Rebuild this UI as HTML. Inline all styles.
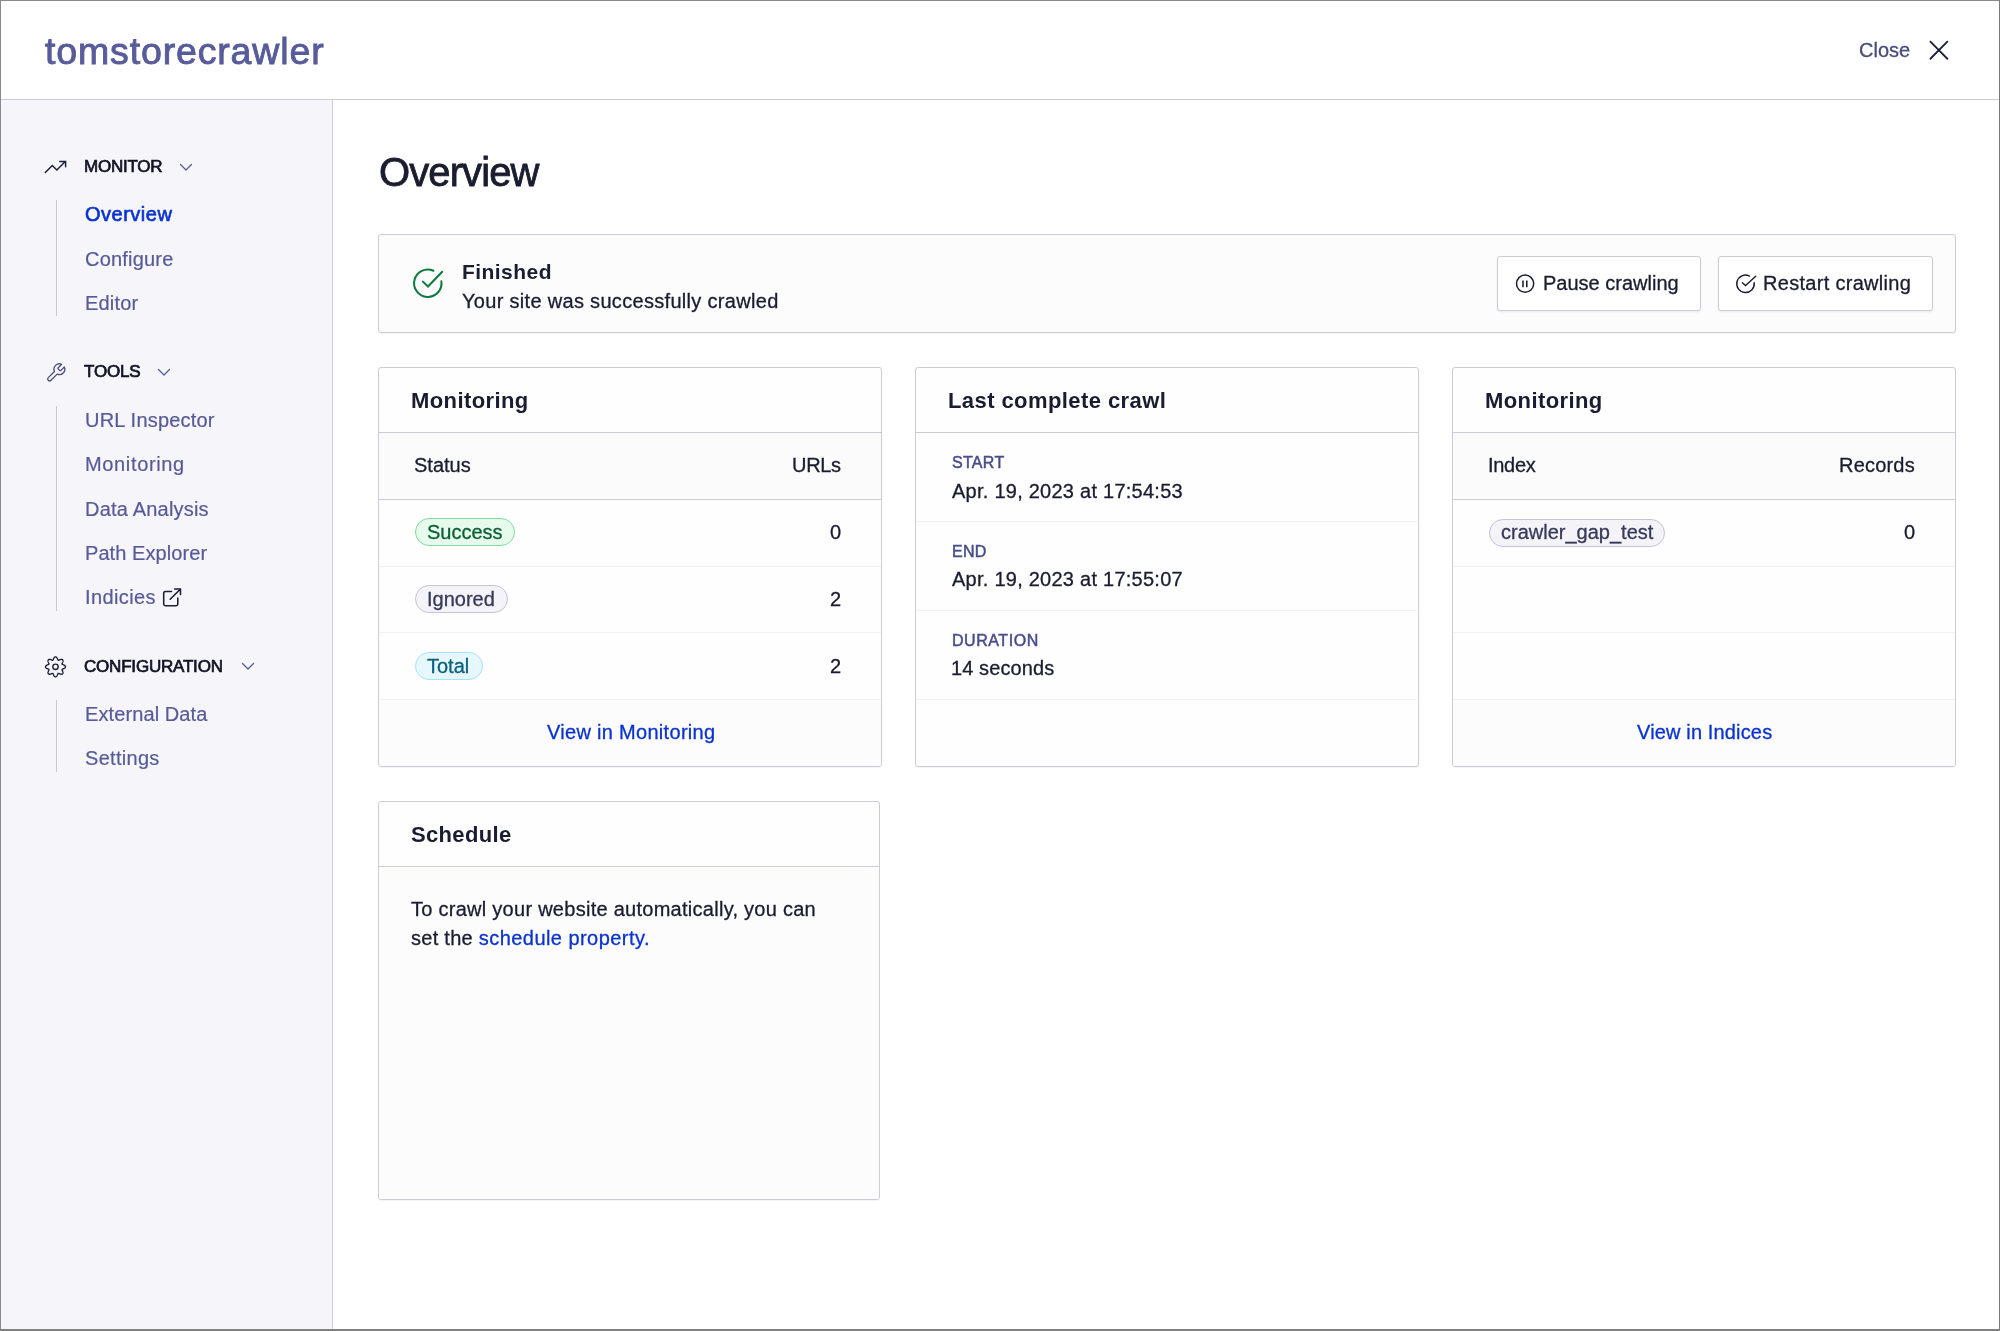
<!DOCTYPE html>
<html><head><meta charset="utf-8"><title>tomstorecrawler</title>
<style>
html,body{margin:0;padding:0;}
body{width:2000px;height:1331px;position:relative;overflow:hidden;background:#fff;font-family:"Liberation Sans", sans-serif;}
.t{position:absolute;white-space:nowrap;font-family:"Liberation Sans", sans-serif;will-change:transform;}
svg{overflow:visible;}
</style></head><body>
<div style="position:absolute;left:0px;top:0px;width:2000px;height:99px;background:#fff;"></div>
<div style="position:absolute;left:0px;top:99px;width:2000px;height:1px;background:#cccbda;"></div>
<div style="position:absolute;left:0px;top:100px;width:332px;height:1231px;background:#f5f5fa;"></div>
<div style="position:absolute;left:332px;top:100px;width:1px;height:1231px;background:#cccbda;"></div>
<div class="t" style="left:44.5px;top:33.12px;font-size:37.5px;line-height:37.5px;color:#585b9a;font-weight:400;letter-spacing:0.85px;-webkit-text-stroke:0.9px #585b9a;">tomstorecrawler</div>
<div class="t" style="left:1859px;top:40.00px;font-size:20px;line-height:20px;color:#484c7a;font-weight:400;-webkit-text-stroke:0.3px #484c7a;">Close</div>
<svg style="position:absolute;left:1927px;top:39px" width="24" height="24" viewBox="0 0 24 24"><path d="M3.4 2.7L20.35 19.75M20.35 2.7L3.4 19.75" stroke="#1c1d36" stroke-width="1.8" fill="none" stroke-linecap="round"/></svg>
<svg style="position:absolute;left:43px;top:159px" width="26" height="18" viewBox="0 0 26 18"><path d="M2.3 13.5L9.3 6.5L13.85 10.9L22.3 2.6M16.8 2.5H22.6V7.7" stroke="#1c1d36" stroke-width="1.45" fill="none" stroke-linecap="round" stroke-linejoin="miter"/></svg>
<div class="t" style="left:84px;top:157.75px;font-size:17px;line-height:17px;color:#121425;font-weight:400;letter-spacing:-0.25px;-webkit-text-stroke:0.7px #121425;">MONITOR</div>
<svg style="position:absolute;left:178px;top:161.5px" width="16" height="10" viewBox="0 0 16 10"><path d="M2.5 2.5L8 8L13.5 2.5" stroke="#575a96" stroke-width="1.3" fill="none" stroke-linecap="round" stroke-linejoin="round"/></svg>
<div style="position:absolute;left:56px;top:200px;width:1px;height:116px;background:#c8c8d6;"></div>
<div class="t" style="left:85.3px;top:203.80px;font-size:20px;line-height:20px;color:#0a33cf;font-weight:400;letter-spacing:0.5px;-webkit-text-stroke:0.65px #0a33cf;">Overview</div>
<div class="t" style="left:85.0px;top:248.50px;font-size:20px;line-height:20px;color:#575a96;font-weight:400;letter-spacing:0.2px;-webkit-text-stroke:0.2px #575a96;">Configure</div>
<div class="t" style="left:84.5px;top:292.50px;font-size:20px;line-height:20px;color:#575a96;font-weight:400;letter-spacing:0.2px;-webkit-text-stroke:0.2px #575a96;">Editor</div>
<svg style="position:absolute;left:44.5px;top:361.5px" width="21.6" height="21.6" viewBox="0 0 24 24"><path d="M14.7 6.3a1 1 0 0 0 0 1.4l1.6 1.6a1 1 0 0 0 1.4 0l3.77-3.77a6 6 0 0 1-7.94 7.94l-6.91 6.91a2.12 2.12 0 0 1-3-3l6.91-6.91a6 6 0 0 1 7.940-7.94l-3.76 3.76z" stroke="#4f5080" stroke-width="1.5" fill="none" stroke-linecap="round" stroke-linejoin="round"/></svg>
<div class="t" style="left:84px;top:363.15px;font-size:17px;line-height:17px;color:#121425;font-weight:400;letter-spacing:-0.2px;-webkit-text-stroke:0.7px #121425;">TOOLS</div>
<svg style="position:absolute;left:156px;top:367px" width="16" height="10" viewBox="0 0 16 10"><path d="M2.5 2.5L8 8L13.5 2.5" stroke="#575a96" stroke-width="1.3" fill="none" stroke-linecap="round" stroke-linejoin="round"/></svg>
<div style="position:absolute;left:56px;top:406px;width:1px;height:205px;background:#c8c8d6;"></div>
<div class="t" style="left:84.5px;top:409.50px;font-size:20px;line-height:20px;color:#575a96;font-weight:400;letter-spacing:0.2px;-webkit-text-stroke:0.2px #575a96;">URL Inspector</div>
<div class="t" style="left:84.5px;top:454.00px;font-size:20px;line-height:20px;color:#575a96;font-weight:400;letter-spacing:0.65px;-webkit-text-stroke:0.2px #575a96;">Monitoring</div>
<div class="t" style="left:84.5px;top:498.50px;font-size:20px;line-height:20px;color:#575a96;font-weight:400;letter-spacing:0.2px;-webkit-text-stroke:0.2px #575a96;">Data Analysis</div>
<div class="t" style="left:84.5px;top:543.00px;font-size:20px;line-height:20px;color:#575a96;font-weight:400;letter-spacing:0.08px;-webkit-text-stroke:0.2px #575a96;">Path Explorer</div>
<div class="t" style="left:84.5px;top:587.30px;font-size:20px;line-height:20px;color:#575a96;font-weight:400;letter-spacing:0.4px;-webkit-text-stroke:0.2px #575a96;">Indicies</div>
<svg style="position:absolute;left:161px;top:586px" width="22" height="22" viewBox="0 0 22 22"><path d="M10.5 5.5H4.5a1.8 1.8 0 0 0-1.8 1.8v10.7a1.8 1.8 0 0 0 1.8 1.8h10.5a1.8 1.8 0 0 0 1.8-1.8V12M13.6 3H19.5V8.6M19.5 3L9.2 13.3" stroke="#1c1d36" stroke-width="1.55" fill="none" stroke-linecap="round" stroke-linejoin="round"/></svg>
<svg style="position:absolute;left:43px;top:654px" width="25" height="25" viewBox="0 0 25 25"><circle cx="12.50" cy="12.80" r="2.7" stroke="#1c1d36" stroke-width="1.4" fill="none"/><path d="M22.50 12.80 L22.48 13.00 L22.43 13.19 L22.35 13.38 L22.23 13.57 L22.09 13.74 L21.92 13.91 L21.72 14.08 L21.51 14.23 L21.28 14.37 L21.04 14.50 L20.79 14.62 L20.55 14.73 L20.30 14.84 L20.06 14.93 L19.84 15.03 L19.63 15.12 L19.44 15.21 L19.28 15.30 L19.15 15.40 L19.06 15.52 L19.04 15.66 L19.06 15.82 L19.11 16.01 L19.18 16.20 L19.26 16.41 L19.36 16.64 L19.46 16.88 L19.56 17.12 L19.65 17.38 L19.74 17.64 L19.82 17.90 L19.88 18.16 L19.92 18.42 L19.95 18.67 L19.95 18.91 L19.92 19.14 L19.87 19.35 L19.80 19.55 L19.70 19.72 L19.57 19.87 L19.42 20.00 L19.25 20.10 L19.05 20.17 L18.84 20.22 L18.61 20.25 L18.37 20.25 L18.12 20.22 L17.86 20.18 L17.60 20.12 L17.34 20.04 L17.08 19.95 L16.82 19.86 L16.58 19.76 L16.34 19.66 L16.11 19.56 L15.90 19.48 L15.71 19.41 L15.52 19.36 L15.36 19.34 L15.22 19.36 L15.10 19.45 L15.00 19.58 L14.91 19.74 L14.82 19.93 L14.73 20.14 L14.63 20.36 L14.54 20.60 L14.43 20.85 L14.32 21.09 L14.20 21.34 L14.07 21.58 L13.93 21.81 L13.78 22.02 L13.61 22.22 L13.44 22.39 L13.27 22.53 L13.08 22.65 L12.89 22.73 L12.70 22.78 L12.50 22.80 L12.30 22.78 L12.11 22.73 L11.92 22.65 L11.73 22.53 L11.56 22.39 L11.39 22.22 L11.22 22.02 L11.07 21.81 L10.93 21.58 L10.80 21.34 L10.68 21.09 L10.57 20.85 L10.46 20.60 L10.37 20.36 L10.27 20.14 L10.18 19.93 L10.09 19.74 L10.00 19.58 L9.90 19.45 L9.78 19.36 L9.64 19.34 L9.48 19.36 L9.29 19.41 L9.10 19.48 L8.89 19.56 L8.66 19.66 L8.42 19.76 L8.18 19.86 L7.92 19.95 L7.66 20.04 L7.40 20.12 L7.14 20.18 L6.88 20.22 L6.63 20.25 L6.39 20.25 L6.16 20.22 L5.95 20.17 L5.75 20.10 L5.58 20.00 L5.43 19.87 L5.30 19.72 L5.20 19.55 L5.13 19.35 L5.08 19.14 L5.05 18.91 L5.05 18.67 L5.08 18.42 L5.12 18.16 L5.18 17.90 L5.26 17.64 L5.35 17.38 L5.44 17.12 L5.54 16.88 L5.64 16.64 L5.74 16.41 L5.82 16.20 L5.89 16.01 L5.94 15.82 L5.96 15.66 L5.94 15.52 L5.85 15.40 L5.72 15.30 L5.56 15.21 L5.37 15.12 L5.16 15.03 L4.94 14.93 L4.70 14.84 L4.45 14.73 L4.21 14.62 L3.96 14.50 L3.72 14.37 L3.49 14.23 L3.28 14.08 L3.08 13.91 L2.91 13.74 L2.77 13.57 L2.65 13.38 L2.57 13.19 L2.52 13.00 L2.50 12.80 L2.52 12.60 L2.57 12.41 L2.65 12.22 L2.77 12.03 L2.91 11.86 L3.08 11.69 L3.28 11.52 L3.49 11.37 L3.72 11.23 L3.96 11.10 L4.21 10.98 L4.45 10.87 L4.70 10.76 L4.94 10.67 L5.16 10.57 L5.37 10.48 L5.56 10.39 L5.72 10.30 L5.85 10.20 L5.94 10.08 L5.96 9.94 L5.94 9.78 L5.89 9.59 L5.82 9.40 L5.74 9.19 L5.64 8.96 L5.54 8.72 L5.44 8.48 L5.35 8.22 L5.26 7.96 L5.18 7.70 L5.12 7.44 L5.08 7.18 L5.05 6.93 L5.05 6.69 L5.08 6.46 L5.13 6.25 L5.20 6.05 L5.30 5.88 L5.43 5.73 L5.58 5.60 L5.75 5.50 L5.95 5.43 L6.16 5.38 L6.39 5.35 L6.63 5.35 L6.88 5.38 L7.14 5.42 L7.40 5.48 L7.66 5.56 L7.92 5.65 L8.18 5.74 L8.42 5.84 L8.66 5.94 L8.89 6.04 L9.10 6.12 L9.29 6.19 L9.48 6.24 L9.64 6.26 L9.78 6.24 L9.90 6.15 L10.00 6.02 L10.09 5.86 L10.18 5.67 L10.27 5.46 L10.37 5.24 L10.46 5.00 L10.57 4.75 L10.68 4.51 L10.80 4.26 L10.93 4.02 L11.07 3.79 L11.22 3.58 L11.39 3.38 L11.56 3.21 L11.73 3.07 L11.92 2.95 L12.11 2.87 L12.30 2.82 L12.50 2.80 L12.70 2.82 L12.89 2.87 L13.08 2.95 L13.27 3.07 L13.44 3.21 L13.61 3.38 L13.78 3.58 L13.93 3.79 L14.07 4.02 L14.20 4.26 L14.32 4.51 L14.43 4.75 L14.54 5.00 L14.63 5.24 L14.73 5.46 L14.82 5.67 L14.91 5.86 L15.00 6.02 L15.10 6.15 L15.22 6.24 L15.36 6.26 L15.52 6.24 L15.71 6.19 L15.90 6.12 L16.11 6.04 L16.34 5.94 L16.58 5.84 L16.82 5.74 L17.08 5.65 L17.34 5.56 L17.60 5.48 L17.86 5.42 L18.12 5.38 L18.37 5.35 L18.61 5.35 L18.84 5.38 L19.05 5.43 L19.25 5.50 L19.42 5.60 L19.57 5.73 L19.70 5.88 L19.80 6.05 L19.87 6.25 L19.92 6.46 L19.95 6.69 L19.95 6.93 L19.92 7.18 L19.88 7.44 L19.82 7.70 L19.74 7.96 L19.65 8.22 L19.56 8.48 L19.46 8.72 L19.36 8.96 L19.26 9.19 L19.18 9.40 L19.11 9.59 L19.06 9.78 L19.04 9.94 L19.06 10.08 L19.15 10.20 L19.28 10.30 L19.44 10.39 L19.63 10.48 L19.84 10.57 L20.06 10.67 L20.30 10.76 L20.55 10.87 L20.79 10.98 L21.04 11.10 L21.28 11.23 L21.51 11.37 L21.72 11.52 L21.92 11.69 L22.09 11.86 L22.23 12.03 L22.35 12.22 L22.43 12.41 L22.48 12.60Z" stroke="#1c1d36" stroke-width="1.35" fill="none" stroke-linejoin="round"/></svg>
<div class="t" style="left:84px;top:657.55px;font-size:17px;line-height:17px;color:#121425;font-weight:400;letter-spacing:-0.2px;-webkit-text-stroke:0.7px #121425;">CONFIGURATION</div>
<svg style="position:absolute;left:239.5px;top:661px" width="16" height="10" viewBox="0 0 16 10"><path d="M2.5 2.5L8 8L13.5 2.5" stroke="#575a96" stroke-width="1.3" fill="none" stroke-linecap="round" stroke-linejoin="round"/></svg>
<div style="position:absolute;left:56px;top:700px;width:1px;height:72px;background:#c8c8d6;"></div>
<div class="t" style="left:84.5px;top:703.80px;font-size:20px;line-height:20px;color:#575a96;font-weight:400;letter-spacing:0.1px;-webkit-text-stroke:0.2px #575a96;">External Data</div>
<div class="t" style="left:85.0px;top:748.00px;font-size:20px;line-height:20px;color:#575a96;font-weight:400;letter-spacing:0.3px;-webkit-text-stroke:0.2px #575a96;">Settings</div>
<div class="t" style="left:379px;top:152.00px;font-size:40px;line-height:40px;color:#1a1c2f;font-weight:400;letter-spacing:-0.9px;-webkit-text-stroke:0.8px #1a1c2f;">Overview</div>
<div style="position:absolute;left:378px;top:234px;width:1578px;height:99px;box-sizing:border-box;border:1px solid #cccbda;border-radius:3px;background:#fcfcfd;box-shadow:0 1px 1px rgba(35,38,59,0.05);"></div>
<svg style="position:absolute;left:410px;top:265.5px" width="36" height="36" viewBox="0 0 36 36"><path d="M31.37 15.34A13.7 13.7 0 1 1 23.44 4.72" stroke="#0b7a3e" stroke-width="2.0" fill="none" stroke-linecap="round"/><path d="M12.9 15.6L18 20.5L32.2 5.8" stroke="#0b7a3e" stroke-width="2.0" fill="none" stroke-linecap="round" stroke-linejoin="miter"/></svg>
<div class="t" style="left:462px;top:261.15px;font-size:21px;line-height:21px;color:#1a1c2f;font-weight:700;letter-spacing:0.45px;">Finished</div>
<div class="t" style="left:462px;top:291.40px;font-size:20px;line-height:20px;color:#1a1c2f;font-weight:400;letter-spacing:0.31px;-webkit-text-stroke:0.3px #1a1c2f;">Your site was successfully crawled</div>
<div style="position:absolute;left:1497px;top:256px;width:204px;height:55px;box-sizing:border-box;border:1px solid #cccbda;border-radius:3px;background:#fff;box-shadow:0 1px 2px rgba(35,38,59,0.08);"></div>
<svg style="position:absolute;left:1513px;top:271.5px" width="24" height="24" viewBox="0 0 24 24"><circle cx="12.1" cy="11.7" r="8.6" stroke="#1c1d36" stroke-width="1.5" fill="none"/><path d="M10.0 8.5v6.7M13.8 8.5v6.7" stroke="#1c1d36" stroke-width="1.55" fill="none"/></svg>
<div class="t" style="left:1543px;top:273.20px;font-size:20px;line-height:20px;color:#1a1c2f;font-weight:400;-webkit-text-stroke:0.3px #1a1c2f;">Pause crawling</div>
<div style="position:absolute;left:1718px;top:256px;width:215px;height:55px;box-sizing:border-box;border:1px solid #cccbda;border-radius:3px;background:#fff;box-shadow:0 1px 2px rgba(35,38,59,0.08);"></div>
<svg style="position:absolute;left:1734px;top:271.5px" width="24" height="24" viewBox="0 0 24 24"><path d="M20.16 10.63A8.75 8.75 0 1 1 15.47 4.05" stroke="#1c1d36" stroke-width="1.45" fill="none" stroke-linecap="round"/><path d="M8.4 10.8L11.55 13.6L21.7 4.2" stroke="#1c1d36" stroke-width="1.45" fill="none" stroke-linecap="round" stroke-linejoin="miter"/></svg>
<div class="t" style="left:1763px;top:273.20px;font-size:20px;line-height:20px;color:#1a1c2f;font-weight:400;letter-spacing:0.3px;-webkit-text-stroke:0.3px #1a1c2f;">Restart crawling</div>
<div style="position:absolute;left:378px;top:367px;width:504px;height:400px;box-sizing:border-box;border:1px solid #cccbda;border-radius:3px;background:#fefefe;overflow:hidden;box-shadow:0 1px 1px rgba(35,38,59,0.05);"></div>
<div style="position:absolute;left:379px;top:432px;width:502px;height:1px;background:#cccbda;"></div>
<div style="position:absolute;left:915px;top:367px;width:504px;height:400px;box-sizing:border-box;border:1px solid #cccbda;border-radius:3px;background:#fefefe;overflow:hidden;box-shadow:0 1px 1px rgba(35,38,59,0.05);"></div>
<div style="position:absolute;left:916px;top:432px;width:502px;height:1px;background:#cccbda;"></div>
<div style="position:absolute;left:1452px;top:367px;width:504px;height:400px;box-sizing:border-box;border:1px solid #cccbda;border-radius:3px;background:#fefefe;overflow:hidden;box-shadow:0 1px 1px rgba(35,38,59,0.05);"></div>
<div style="position:absolute;left:1453px;top:432px;width:502px;height:1px;background:#cccbda;"></div>
<div class="t" style="left:411px;top:389.80px;font-size:22px;line-height:22px;color:#1a1c2f;font-weight:700;letter-spacing:0.4px;">Monitoring</div>
<div style="position:absolute;left:379px;top:433px;width:502px;height:66px;background:#fbfbfc;"></div>
<div style="position:absolute;left:379px;top:499px;width:502px;height:1px;background:#cccbda;"></div>
<div class="t" style="left:413.8px;top:455.30px;font-size:20px;line-height:20px;color:#1a1c2f;font-weight:400;-webkit-text-stroke:0.3px #1a1c2f;">Status</div>
<div class="t" style="right:1159px;top:455.30px;font-size:20px;line-height:20px;color:#1a1c2f;font-weight:400;letter-spacing:-0.3px;-webkit-text-stroke:0.3px #1a1c2f;">URLs</div>
<div style="position:absolute;left:379px;top:566px;width:502px;height:1px;background:#f0f0f5;"></div>
<div style="position:absolute;left:379px;top:632px;width:502px;height:1px;background:#f0f0f5;"></div>
<div style="position:absolute;left:379px;top:699px;width:502px;height:1px;background:#f0f0f5;"></div>
<div style="position:absolute;left:379px;top:700px;width:502px;height:66px;background:#fcfcfc;border-radius:0 0 2px 2px;"></div>
<div style="position:absolute;left:415px;top:518px;width:100px;height:28px;box-sizing:border-box;border:1px solid #7fe0a0;border-radius:14px;background:#e6fbec;"></div>
<div class="t" style="left:427px;top:521.80px;font-size:20px;line-height:20px;color:#0b5f33;font-weight:400;-webkit-text-stroke:0.3px #0b5f33;">Success</div>
<div style="position:absolute;left:415px;top:585px;width:93px;height:28px;box-sizing:border-box;border:1px solid #c4c4d4;border-radius:14px;background:#f3f3f8;"></div>
<div class="t" style="left:427px;top:588.80px;font-size:20px;line-height:20px;color:#36395a;font-weight:400;-webkit-text-stroke:0.3px #36395a;">Ignored</div>
<div style="position:absolute;left:415px;top:652px;width:68px;height:28px;box-sizing:border-box;border:1px solid #a8e2f5;border-radius:14px;background:#e6f8fd;"></div>
<div class="t" style="left:427px;top:655.50px;font-size:20px;line-height:20px;color:#08607f;font-weight:400;-webkit-text-stroke:0.3px #08607f;">Total</div>
<div class="t" style="right:1159px;top:522.20px;font-size:20px;line-height:20px;color:#1a1c2f;font-weight:400;-webkit-text-stroke:0.3px #1a1c2f;">0</div>
<div class="t" style="right:1159px;top:589.00px;font-size:20px;line-height:20px;color:#1a1c2f;font-weight:400;-webkit-text-stroke:0.3px #1a1c2f;">2</div>
<div class="t" style="right:1159px;top:655.50px;font-size:20px;line-height:20px;color:#1a1c2f;font-weight:400;-webkit-text-stroke:0.3px #1a1c2f;">2</div>
<div class="t" style="left:546.5px;top:722.00px;font-size:20px;line-height:20px;color:#0a33cf;font-weight:400;letter-spacing:0.3px;-webkit-text-stroke:0.3px #0a33cf;">View in Monitoring</div>
<div class="t" style="left:948px;top:389.70px;font-size:22px;line-height:22px;color:#1a1c2f;font-weight:700;letter-spacing:0.42px;">Last complete crawl</div>
<div class="t" style="left:951.5px;top:455.40px;font-size:16px;line-height:16px;color:#484c88;font-weight:400;letter-spacing:0.3px;-webkit-text-stroke:0.5px #484c88;">START</div>
<div class="t" style="left:951.5px;top:480.50px;font-size:20px;line-height:20px;color:#1a1c2f;font-weight:400;letter-spacing:0.25px;-webkit-text-stroke:0.3px #1a1c2f;">Apr. 19, 2023 at 17:54:53</div>
<div style="position:absolute;left:916px;top:521px;width:501px;height:1px;background:#f0f0f5;"></div>
<div class="t" style="left:951.5px;top:544.40px;font-size:16px;line-height:16px;color:#484c88;font-weight:400;letter-spacing:0.3px;-webkit-text-stroke:0.5px #484c88;">END</div>
<div class="t" style="left:951.5px;top:569.00px;font-size:20px;line-height:20px;color:#1a1c2f;font-weight:400;letter-spacing:0.25px;-webkit-text-stroke:0.3px #1a1c2f;">Apr. 19, 2023 at 17:55:07</div>
<div style="position:absolute;left:916px;top:610px;width:501px;height:1px;background:#f0f0f5;"></div>
<div class="t" style="left:951.5px;top:633.40px;font-size:16px;line-height:16px;color:#484c88;font-weight:400;letter-spacing:0.55px;-webkit-text-stroke:0.5px #484c88;">DURATION</div>
<div class="t" style="left:950.5px;top:658.00px;font-size:20px;line-height:20px;color:#1a1c2f;font-weight:400;letter-spacing:0.1px;-webkit-text-stroke:0.3px #1a1c2f;">14 seconds</div>
<div style="position:absolute;left:916px;top:699px;width:501px;height:1px;background:#f0f0f5;"></div>
<div class="t" style="left:1484.5px;top:389.80px;font-size:22px;line-height:22px;color:#1a1c2f;font-weight:700;letter-spacing:0.4px;">Monitoring</div>
<div style="position:absolute;left:1453px;top:433px;width:502px;height:66px;background:#fbfbfc;"></div>
<div style="position:absolute;left:1453px;top:499px;width:502px;height:1px;background:#cccbda;"></div>
<div class="t" style="left:1487.5px;top:455.30px;font-size:20px;line-height:20px;color:#1a1c2f;font-weight:400;letter-spacing:-0.3px;-webkit-text-stroke:0.3px #1a1c2f;">Index</div>
<div class="t" style="right:85px;top:455.30px;font-size:20px;line-height:20px;color:#1a1c2f;font-weight:400;letter-spacing:0.2px;-webkit-text-stroke:0.3px #1a1c2f;">Records</div>
<div style="position:absolute;left:1489px;top:518.5px;width:176px;height:28px;box-sizing:border-box;border:1px solid #c4c4d4;border-radius:14px;background:#f3f3f8;"></div>
<div class="t" style="left:1501px;top:522.00px;font-size:20px;line-height:20px;color:#36395a;font-weight:400;-webkit-text-stroke:0.3px #36395a;">crawler_gap_test</div>
<div class="t" style="right:85px;top:522.20px;font-size:20px;line-height:20px;color:#1a1c2f;font-weight:400;-webkit-text-stroke:0.3px #1a1c2f;">0</div>
<div style="position:absolute;left:1453px;top:566px;width:502px;height:1px;background:#f0f0f5;"></div>
<div style="position:absolute;left:1453px;top:632px;width:502px;height:1px;background:#f0f0f5;"></div>
<div style="position:absolute;left:1453px;top:699px;width:502px;height:1px;background:#f0f0f5;"></div>
<div style="position:absolute;left:1453px;top:700px;width:502px;height:66px;background:#fcfcfc;border-radius:0 0 2px 2px;"></div>
<div class="t" style="left:1637px;top:722.00px;font-size:20px;line-height:20px;color:#0a33cf;font-weight:400;letter-spacing:0.15px;-webkit-text-stroke:0.3px #0a33cf;">View in Indices</div>
<div style="position:absolute;left:378px;top:801px;width:502px;height:399px;box-sizing:border-box;border:1px solid #cccbda;border-radius:3px;background:#fefefe;overflow:hidden;box-shadow:0 1px 1px rgba(35,38,59,0.05);"></div>
<div style="position:absolute;left:379px;top:866px;width:500px;height:1px;background:#cccbda;"></div>
<div style="position:absolute;left:379px;top:867px;width:500px;height:332px;background:#fcfcfc;border-radius:0 0 2px 2px;"></div>
<div class="t" style="left:410.5px;top:824.30px;font-size:22px;line-height:22px;color:#1a1c2f;font-weight:700;letter-spacing:0.33px;">Schedule</div>
<div class="t" style="left:410.5px;top:899.40px;font-size:20px;line-height:20px;color:#1a1c2f;font-weight:400;letter-spacing:0.27px;-webkit-text-stroke:0.3px #1a1c2f;">To crawl your website automatically, you can</div>
<div class="t" style="left:410.5px;top:927.50px;font-size:20px;line-height:20px;color:#1a1c2f;font-weight:400;letter-spacing:0.27px;-webkit-text-stroke:0.3px #1a1c2f;">set the <span style="color:#0a33cf;letter-spacing:0.45px;-webkit-text-stroke:0.3px #0a33cf">schedule property.</span></div>
<div style="position:absolute;left:0px;top:0px;width:2000px;height:1px;background:#8a8a8a;"></div>
<div style="position:absolute;left:0px;top:0px;width:1px;height:1331px;background:#8a8a8a;"></div>
<div style="position:absolute;left:1999px;top:0px;width:1px;height:1331px;background:#7a7a7a;"></div>
<div style="position:absolute;left:0px;top:1329px;width:2000px;height:2px;background:#808080;"></div>
</body></html>
